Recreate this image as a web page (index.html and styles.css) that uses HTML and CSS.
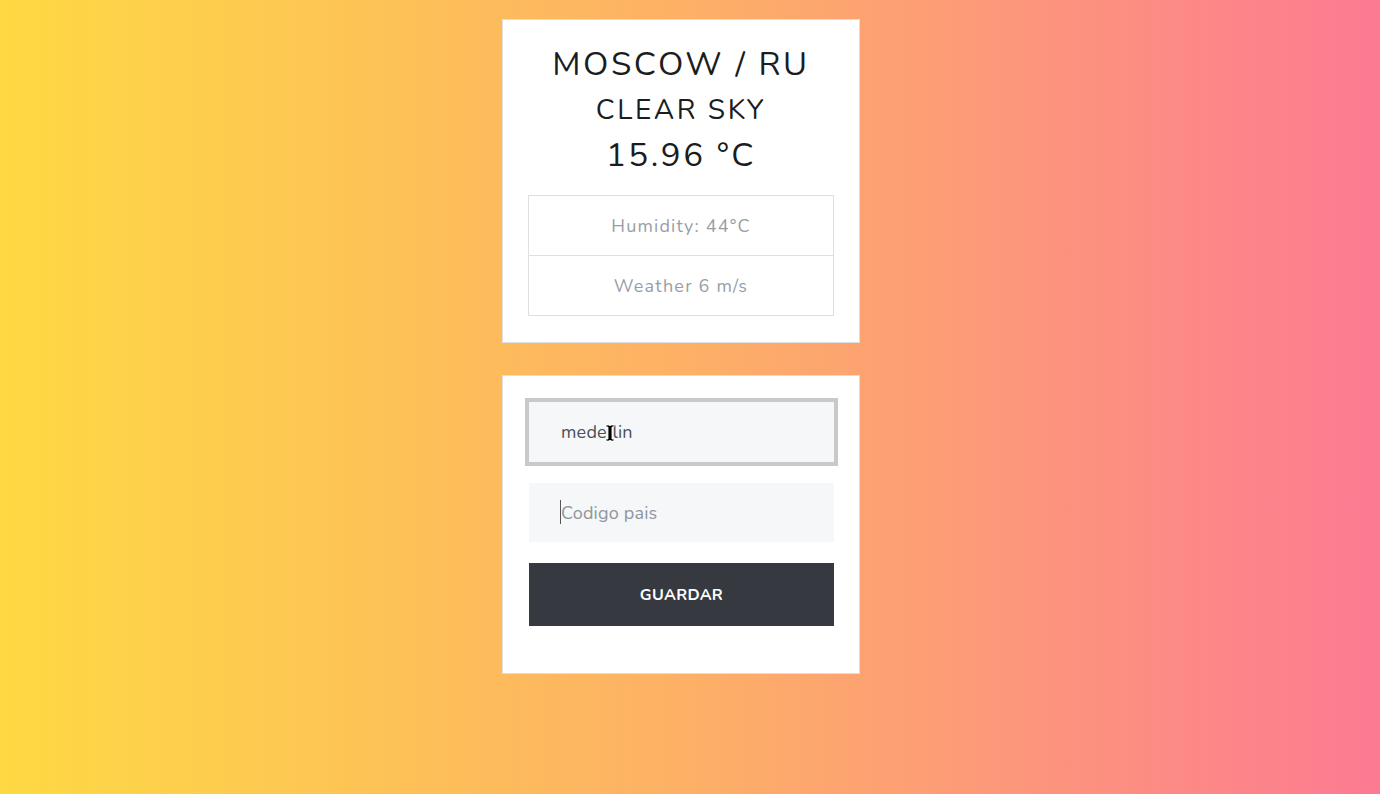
FILE: index.html
```html
<!DOCTYPE html>
<html lang="en">
<head>
<meta charset="utf-8">
<title>Weather</title>
<link rel="stylesheet" href="styles.css">
</head>
<body>
<main class="page">
  <section class="card weather">
    <h1 class="city">MOSCOW / RU</h1>
    <h2 class="desc">CLEAR SKY</h2>
    <h2 class="temp">15.96 °C</h2>
    <ul class="list">
      <li class="item">Humidity: 44°C</li>
      <li class="item">Weather 6 m/s</li>
    </ul>
  </section>
  <section class="card form">
    <div class="field focused">
      <span class="value">medellin</span>
      <svg class="ibeam" width="10" height="18" viewBox="0 0 10 18"><path d="M1 1h3l1 1 1-1h3v2H7v12h2v2H6l-1-1-1 1H1v-2h2V3H1z" fill="#000" stroke="#fff" stroke-width="0.8"/></svg>
    </div>
    <div class="field second">
      <span class="caret"></span>
      <span class="placeholder">Codigo pais</span>
    </div>
    <button class="btn">GUARDAR</button>
  </section>
</main>
</body>
</html>
```
FILE: styles.css
```css
* { box-sizing: border-box; }
html, body { margin: 0; height: 100%; }
body {
  background: linear-gradient(to right, #fed943 0%, #fdb066 50%, #fc7a92 100%);
  font-family: "Nunito", Lato, "Open Sans", sans-serif;
  min-height: 794px;
}
.page {
  display: flex;
  flex-direction: column;
  align-items: center;
  gap: 32px;
  padding: 19px 18px 0 0;
}
.card {
  width: 358px;
  background: #fff;
  border: 1px solid rgba(0,0,0,0.125);
  padding: 26px 25px;
}
.weather { text-align: center; padding-top: 24px; }
.city {
  margin: 0;
  font-size: 33px;
  font-weight: 400;
  letter-spacing: 2.6px;
  line-height: 42px;
  color: #1a1d20;
}
.desc {
  margin: 0;
  font-size: 28px;
  font-weight: 400;
  letter-spacing: 2.6px;
  line-height: 48px;
  color: #1a1d20;
}
.temp {
  margin: 0 0 17px;
  font-size: 33px;
  font-weight: 400;
  letter-spacing: 2.6px;
  line-height: 44px;
  color: #1a1d20;
}
.list {
  list-style: none;
  margin: 0;
  padding: 0;
  border: 1px solid rgba(0,0,0,0.125);
}
.item {
  height: 59px;
  display: flex;
  align-items: center;
  justify-content: center;
  font-size: 18px;
  letter-spacing: 1.2px;
  color: #989ea5;
}
.item + .item { height: 60px; border-top: 1px solid rgba(0,0,0,0.125); }
.form { display: flex; flex-direction: column; gap: 21px; padding: 26px 25px 47px 26px; }
.field {
  position: relative;
  height: 60px;
  background: #f6f7f9;
  display: flex;
  align-items: center;
  padding-left: 32px;
  font-size: 18px;
}
.field.second { height: 59px; }
.field.focused { outline: 4px solid #c9c9c9; }
.value { color: #495057; letter-spacing: 0.2px; }
.placeholder { color: #8e959c; letter-spacing: 0.2px; }
.caret {
  position: absolute;
  left: 31px;
  top: 17px;
  width: 1px;
  height: 24px;
  background: #555;
}
.ibeam { position: absolute; left: 76px; top: 22px; }
.btn {
  height: 63px;
  border: 0;
  background: #363a40;
  color: #fff;
  font-family: inherit;
  font-size: 16px;
  font-weight: 700;
  letter-spacing: 0.3px;
}
```
